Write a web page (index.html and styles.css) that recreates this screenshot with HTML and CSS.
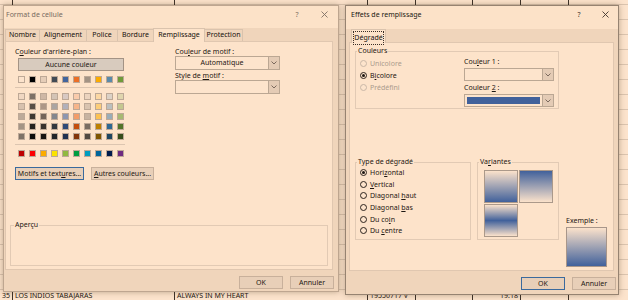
FILE: index.html
```html
<!DOCTYPE html>
<html lang="fr">
<head>
  <meta charset="UTF-8">
  <title>Format de cellule</title>
  <link rel="stylesheet" href="styles.css">
</head>
<body>
  <div class="sheet">
    <div class="sheet-row row-top">
      <span class="cell c-num"></span>
      <span class="cell c-artist"></span>
      <span class="cell c-title"></span>
      <span class="cell c-ref"></span>
      <span class="cell c-a"></span>
      <span class="cell c-time"></span>
      <span class="cell c-b"></span>
      <span class="cell c-c"></span>
    </div>
    <div class="sheet-row row-bottom">
      <span class="cell c-num">35</span>
      <span class="cell c-artist">LOS INDIOS TABAJARAS</span>
      <span class="cell c-title">ALWAYS IN MY HEART</span>
      <span class="cell c-ref">19550717 V</span>
      <span class="cell c-a"></span>
      <span class="cell c-time">19:18</span>
      <span class="cell c-b"></span>
      <span class="cell c-c"></span>
    </div>
  </div>

  <!-- Format de cellule (inactive window) -->
  <div class="window format-dialog">
    <div class="titlebar inactive">
      <span class="title">Format de cellule</span>
      <span class="title-help">?</span>
      <svg class="title-close" width="7" height="7" viewBox="0 0 7 7"><path d="M0.5 0.5L6.5 6.5M6.5 0.5L0.5 6.5"/></svg>
    </div>
    <div class="tabs">
      <span class="tab tab-nombre">Nombre</span>
      <span class="tab tab-alignement">Alignement</span>
      <span class="tab tab-police">Police</span>
      <span class="tab tab-bordure">Bordure</span>
      <span class="tab tab-remplissage selected">Remplissage</span>
      <span class="tab tab-protection">Protection</span>
    </div>
    <div class="panel">
      <div class="fill-cols">
        <div class="bg-col">
          <div class="field-label">C<u>o</u>uleur d'arrière-plan :</div>
          <div class="btn btn-none">Aucune couleur</div>
          <div class="swatch-row" id="themeRow"></div>
          <div class="sep"></div>
          <div class="swatch-grid" id="shadeGrid"></div>
          <div class="sep"></div>
          <div class="swatch-row" id="standardRow"></div>
          <div class="btn-row">
            <span class="btn btn-focus btn-motifs"><span>Motifs et text<u>u</u>res...</span></span>
            <span class="btn btn-autres"><span><u>A</u>utres couleurs...</span></span>
          </div>
        </div>
        <div class="pattern-col">
          <div class="field-label">Cou<u>l</u>eur de motif :</div>
          <div class="select select-motif">
            <span class="select-value">Automatique</span>
            <span class="select-arrow"><svg width="6" height="4" viewBox="0 0 6 4"><path d="M0.5 0.5L3 3L5.5 0.5"/></svg></span>
          </div>
          <div class="field-label">Style de <u>m</u>otif :</div>
          <div class="select select-motif">
            <span class="select-value"></span>
            <span class="select-arrow"><svg width="6" height="4" viewBox="0 0 6 4"><path d="M0.5 0.5L3 3L5.5 0.5"/></svg></span>
          </div>
        </div>
      </div>
      <fieldset class="group preview-group"><legend>Aperçu</legend></fieldset>
    </div>
    <div class="footer">
      <span class="btn btn-footer">OK</span>
      <span class="btn btn-footer">Annuler</span>
    </div>
  </div>

  <!-- Effets de remplissage (active window) -->
  <div class="window fill-dialog">
    <div class="titlebar">
      <span class="title">Effets de remplissage</span>
      <span class="title-help">?</span>
      <svg class="title-close" width="7" height="7" viewBox="0 0 7 7"><path d="M0.5 0.5L6.5 6.5M6.5 0.5L0.5 6.5"/></svg>
    </div>
    <div class="tabs">
      <span class="tab tab-degrade selected"><span class="focus-box">Dégradé</span></span>
    </div>
    <div class="panel">
      <fieldset class="group colors-group">
        <legend>Couleurs</legend>
        <div class="colors-body">
          <div class="radio-list">
            <div class="radio disabled"><span class="radio-dot"></span><span>Unicolore</span></div>
            <div class="radio checked"><span class="radio-dot"></span><span>B<u>i</u>colore</span></div>
            <div class="radio disabled"><span class="radio-dot"></span><span>Prédéfini</span></div>
          </div>
          <div class="color-pickers">
            <div class="field-label">Cou<u>l</u>eur 1 :</div>
            <div class="select select-color">
              <span class="select-value"></span>
              <span class="select-arrow"><svg width="6" height="4" viewBox="0 0 6 4"><path d="M0.5 0.5L3 3L5.5 0.5"/></svg></span>
            </div>
            <div class="field-label label-second">Couleur <u>2</u> :</div>
            <div class="select select-color">
              <span class="select-value"><span class="color-fill"></span></span>
              <span class="select-arrow"><svg width="6" height="4" viewBox="0 0 6 4"><path d="M0.5 0.5L3 3L5.5 0.5"/></svg></span>
            </div>
          </div>
        </div>
      </fieldset>

      <div class="gradient-row">
        <fieldset class="group type-group">
          <legend>Type de dégradé</legend>
          <div class="radio-list type-list">
            <div class="radio checked"><span class="radio-dot"></span><span>Hori<u>z</u>ontal</span></div>
            <div class="radio"><span class="radio-dot"></span><span><u>V</u>ertical</span></div>
            <div class="radio"><span class="radio-dot"></span><span>Diagonal <u>h</u>aut</span></div>
            <div class="radio"><span class="radio-dot"></span><span>Diagonal <u>b</u>as</span></div>
            <div class="radio"><span class="radio-dot"></span><span>Du co<u>i</u>n</span></div>
            <div class="radio"><span class="radio-dot"></span><span>Du <u>c</u>entre</span></div>
          </div>
        </fieldset>
        <fieldset class="group variants-group">
          <legend>Va<u>r</u>iantes</legend>
          <div class="variants">
            <span class="variant v-down"></span>
            <span class="variant v-up"></span>
            <span class="variant v-mid"></span>
          </div>
        </fieldset>
        <div class="example">
          <div class="field-label">Exemple :</div>
          <div class="example-box"></div>
        </div>
      </div>
    </div>
    <div class="footer">
      <span class="btn btn-footer btn-focus">OK</span>
      <span class="btn btn-footer">Annuler</span>
    </div>
  </div>

  <script>
    // Office theme palette, shown through a warm night-light tint
    const theme = ['FFFFFF', '000000', 'E7E6E6', '44546A', '4472C4', 'ED7D31', 'A5A5A5', 'FFC000', '5B9BD5', '70AD47'];
    const shades = [
      ['F2F2F2', '7F7F7F', 'D0CECE', 'D6DCE4', 'D9E1F2', 'FCE4D6', 'EDEDED', 'FFF2CC', 'DDEBF7', 'E2EFDA'],
      ['D9D9D9', '595959', 'AEAAAA', 'ADB9CA', 'B4C6E7', 'F8CBAD', 'DBDBDB', 'FFE699', 'BDD7EE', 'C6E0B4'],
      ['BFBFBF', '404040', '757171', '8497B0', '8EA9DB', 'F4B084', 'C9C9C9', 'FFD966', '9BC2E6', 'A9D08E'],
      ['A6A6A6', '262626', '3A3838', '333F4F', '305496', 'C65911', '7B7B7B', 'BF8F00', '2F75B5', '548235'],
      ['808080', '0D0D0D', '171616', '222A35', '203764', '833C0C', '525252', '806000', '1F4E78', '375623']
    ];
    const standard = ['C00000', 'FF0000', 'FFC000', 'FFFF00', '92D050', '00B050', '00B0F0', '0070C0', '002060', '7030A0'];

    function tint(hex) {
      const r = parseInt(hex.slice(0, 2), 16);
      const g = parseInt(hex.slice(2, 4), 16);
      const b = parseInt(hex.slice(4, 6), 16);
      return `rgb(${Math.round(r * 0.99)}, ${Math.round(g * 0.89)}, ${Math.round(b * 0.8)})`;
    }

    function fillRow(row, colors) {
      colors.forEach(function(c) {
        const swatch = document.createElement('span');
        swatch.className = 'swatch';
        swatch.style.background = tint(c);
        row.appendChild(swatch);
      });
    }

    fillRow(document.getElementById('themeRow'), theme);
    fillRow(document.getElementById('standardRow'), standard);

    const grid = document.getElementById('shadeGrid');
    shades.forEach(function(colors) {
      const row = document.createElement('div');
      row.className = 'swatch-row';
      fillRow(row, colors);
      grid.appendChild(row);
    });
  </script>
</body>
</html>
```

FILE: styles.css
```css
* {
  box-sizing: border-box;
}

body {
  margin: 0;
  width: 628px;
  height: 300px;
  overflow: hidden;
  position: relative;
  background: #fce3cc;
  font-family: "Noto Sans", sans-serif;
  font-size: 7px;
  color: #1d1712;
}

u {
  text-underline-offset: 1px;
}

/* spreadsheet behind the dialogs */
.sheet {
  height: 300px;
  display: flex;
  flex-direction: column;
  justify-content: space-between;
  background-image: repeating-linear-gradient(to bottom, transparent 0 14px, #dbc4af 14px 15px);
  background-position: 0 5px;
}

.sheet-row {
  display: flex;
  height: 14px;
  line-height: 14px;
  color: #1c1610;
}

.row-top {
  margin-top: -9px;
}

.row-bottom {
  margin-bottom: -3px;
}

.cell {
  flex: none;
  border-right: 1px solid #3e3229;
  padding-left: 2px;
  white-space: nowrap;
  overflow: hidden;
}

.c-num { width: 13px; }
.c-artist { width: 162px; }
.c-title { width: 193px; }
.c-ref { width: 48px; }
.c-a { width: 57px; }
.c-time { width: 48px; padding-left: 27px; }
.c-b { width: 48px; }
.c-c { width: 60px; border-right: none; }

/* dialog windows */
.window {
  position: absolute;
  top: 5px;
  display: flex;
  flex-direction: column;
  background: #f0d5bb;
  border: 1px solid #bea690;
  box-shadow: 0 0 6px rgba(70, 45, 20, 0.35);
}

.format-dialog {
  left: 3px;
  width: 336px;
  height: 287px;
}

.fill-dialog {
  left: 345px;
  width: 274px;
  height: 290px;
  border-color: #968371;
}

.titlebar {
  display: flex;
  align-items: flex-start;
  height: 22px;
  padding: 4px 10px 0 2px;
  background: #fce2c8;
  line-height: 10px;
  color: #201812;
}

.fill-dialog .titlebar {
  height: 23px;
  padding: 4px 9px 0 5px;
}

.titlebar.inactive {
  color: #776a5f;
}

.title-help {
  margin-left: auto;
  width: 8px;
  text-align: center;
  color: #7d6f64;
}

.title-close {
  margin: 1px 0 0 20px;
  stroke: #7d6f64;
  stroke-width: 0.9;
}

.fill-dialog .title-help {
  color: #3f342c;
}

.fill-dialog .title-close {
  margin-left: 19px;
  stroke: #3f342c;
}

/* tabs */
.tabs {
  display: flex;
  align-items: flex-end;
  height: 13px;
  padding-left: 1px;
}

.fill-dialog .tabs {
  padding-left: 5px;
}

.tab {
  height: 12px;
  margin-right: -1px;
  border: 1px solid #dac3ad;
  border-bottom: none;
  line-height: 10px;
  text-align: center;
  color: #15100c;
}

.tab.selected {
  position: relative;
  z-index: 1;
  height: 14px;
  margin-bottom: -1px;
  background: #fde3ca;
  line-height: 12px;
}

.tab-nombre { width: 35px; }
.tab-alignement { width: 48px; }
.tab-police { width: 32px; }
.tab-bordure { width: 37px; }
.tab-remplissage { width: 52px; }
.tab-protection { width: 39px; }
.tab-degrade { width: 35px; padding: 1px 1px 0; line-height: 10px; }

.focus-box {
  display: block;
  border: 1px dotted #3a2e26;
}

.panel {
  height: 229px;
  background: #fde3ca;
  border: 1px solid #e0c7b0;
}

.format-dialog .panel {
  margin: 0 5px 0 1px;
}

.fill-dialog .panel {
  margin: 0 4px 0 3px;
}

.footer {
  flex: 1;
  display: flex;
  justify-content: flex-end;
  align-items: flex-start;
  gap: 7px;
  padding: 6px 4px 0 0;
}

.fill-dialog .footer {
  padding: 6px 2px 0 0;
}

/* buttons */
.btn {
  display: flex;
  align-items: center;
  justify-content: center;
  height: 13px;
  border: 1px solid #c8b09b;
  background: #e8cfb8;
  white-space: nowrap;
}

.btn-focus {
  border-color: #3b6a9d;
}

.btn-footer {
  width: 44px;
}

.btn-none {
  width: 106px;
  margin: 1px 0 0 3px;
  background: #d8cbbe;
  border-color: #a39385;
}

.btn-row {
  display: flex;
  gap: 7px;
  margin-top: 10px;
}

.btn-motifs {
  width: 69px;
}

.btn-autres {
  width: 63px;
}

/* Remplissage tab */
.fill-cols {
  display: flex;
  padding: 5px 0 0 9px;
}

.bg-col {
  width: 160px;
}

.field-label {
  line-height: 10px;
  height: 10px;
  white-space: nowrap;
}

.swatch-row {
  display: flex;
  gap: 4px;
}

.bg-col > .swatch-row,
.swatch-grid {
  margin-left: 3px;
}

#themeRow {
  margin-top: 5px;
}

.swatch-grid {
  display: flex;
  flex-direction: column;
  gap: 3px;
}

.swatch {
  width: 7px;
  height: 7px;
  border: 1px solid #bda896;
}

.sep {
  width: 110px;
  height: 1px;
  margin: 4px 0 5px;
  background: #dcc5b0;
}

.pattern-col .select {
  margin: -1px 0 1px;
}

.select {
  display: flex;
  height: 14px;
  border: 1px solid #bba793;
  background: #fde4cc;
}

.select-motif {
  width: 105px;
}

.select-value {
  flex: 1;
  line-height: 12px;
  text-align: center;
}

.select-arrow {
  display: flex;
  align-items: center;
  justify-content: center;
  width: 11px;
  border-left: 1px solid #bba793;
  background: #e4cbb5;
}

.select-arrow svg {
  fill: none;
  stroke: #6e5e52;
  stroke-width: 0.9;
}

/* group boxes */
.group {
  margin: 0;
  padding: 0;
  min-width: 0;
  border: 1px solid #e2cab4;
}

.group legend {
  margin-left: 1px;
  padding: 0 1px;
  line-height: 8px;
}

.preview-group {
  width: 318px;
  height: 45px;
  margin: 41px 0 0 4px;
}

.preview-group legend {
  margin-left: 3px;
}

/* Effets de remplissage */
.colors-group {
  width: 204px;
  height: 62px;
  margin: 4px 0 0 5px;
}

.colors-body {
  display: flex;
  padding: 2px 0 0 4px;
}

.radio-list {
  width: 104px;
}

.radio {
  display: flex;
  align-items: center;
  gap: 3px;
  height: 12px;
  white-space: nowrap;
}

.radio-dot {
  display: flex;
  align-items: center;
  justify-content: center;
  width: 7px;
  height: 7px;
  border: 1px solid #2c231d;
  border-radius: 50%;
  background: #fde4cc;
}

.radio.checked .radio-dot::after {
  content: "";
  width: 3px;
  height: 3px;
  border-radius: 50%;
  background: #1d1712;
}

.radio.disabled {
  color: #ab9b8d;
}

.radio.disabled .radio-dot {
  border-color: #c9b7a7;
}

.color-pickers {
  width: 90px;
}

.select-color {
  width: 90px;
  height: 13px;
  margin-top: 1px;
}

.label-second {
  margin-top: 2px;
}

.select-color .select-value {
  display: flex;
  padding: 2px;
}

.color-fill {
  flex: 1;
  background: #41619b;
}

.gradient-row {
  display: flex;
  align-items: flex-start;
  gap: 6px;
  margin: 49px 0 0 5px;
}

.type-group {
  width: 116px;
  height: 82px;
}

.type-list {
  padding: 1px 0 0 4px;
}

.type-list .radio {
  height: 11.6px;
}

.variants-group {
  width: 82px;
  height: 82px;
}

.variants {
  display: grid;
  grid-template-columns: 34px 34px;
  grid-template-rows: 33px 33px;
  gap: 1px;
  padding: 4px 0 0 6px;
}

.variant {
  border: 1px solid #ab998a;
}

.v-down {
  background: linear-gradient(#fbe2cb, #41619b);
}

.v-up {
  background: linear-gradient(#41619b, #fbe2cb);
}

.v-mid {
  background: linear-gradient(#fbe2cb, #41619b 50%, #fbe2cb);
}

.example {
  margin: 58px 0 0 1px;
}

.example-box {
  width: 41px;
  height: 40px;
  margin-top: 1px;
  border: 1px solid #a8968a;
  background: linear-gradient(#fbe2cb, #41619b);
}
```
